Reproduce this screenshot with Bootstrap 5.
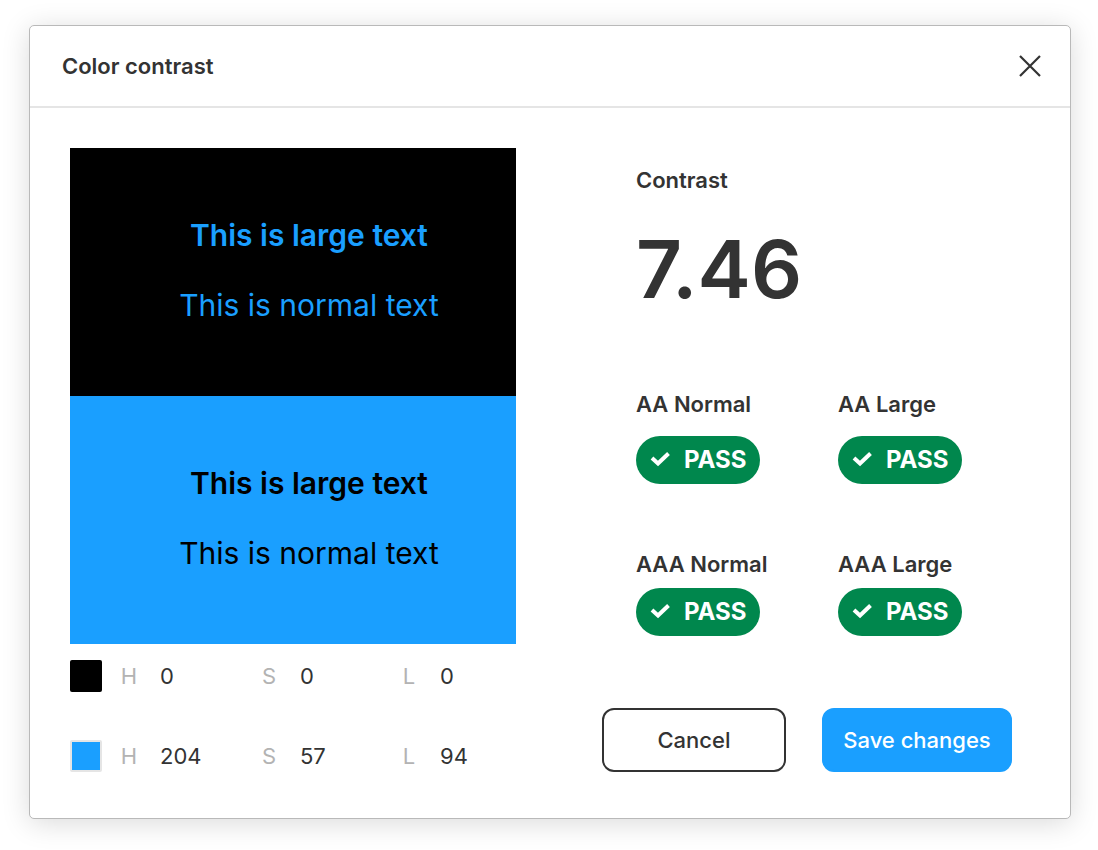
<!DOCTYPE html>
<html lang="en">
<head>
<meta charset="utf-8">
<meta name="viewport" content="width=device-width, initial-scale=1">
<title>Color contrast</title>
<link href="https://cdn.jsdelivr.net/npm/bootstrap@5.3.0/dist/css/bootstrap.min.css" rel="stylesheet">
<style>
  :root { --ink: #333; --accent: #1a9fff; --line: #e5e5e5; --good: #00874d; }
  body { font-family: Inter, "Liberation Sans", sans-serif; font-size: 22px; line-height: 32px; color: var(--ink); background: #fff; }
  .page-shell { padding: 25px 27px 31px 29px; }
  .plugin { border: 1px solid #b9b9b9; border-radius: 5px; background: #fff; box-shadow: 0 4px 28px rgba(0, 0, 0, .15); }
  .plugin-head { height: 82px; padding: 0 24px 0 32px; border-bottom: 2px solid var(--line); }
  .plugin-title, .metric-title { font-size: 22px; line-height: 32px; font-weight: 600; margin: 0; }
  .close-btn { width: 32px; height: 32px; padding: 0; border: 0; background: none; color: var(--ink); }
  .plugin-body { padding: 40px 58px 46px 40px; column-gap: 86px; row-gap: 40px; }
  .sample { height: 248px; padding: 67px 0 0 32px; text-align: center; font-size: 30px; line-height: 40px; }
  .sample p { margin: 0 0 30px; }
  .sample-dark { background: #000; color: var(--accent); }
  .sample-blue { background: var(--accent); color: #000; }
  .swatch { width: 32px; height: 32px; border-radius: 2px; margin-right: 18px; }
  .swatch-black { background: #000; }
  .swatch-blue { background: var(--accent); border: 2px solid var(--line); }
  .channel { width: 140px; flex: none; }
  .channel:last-child { width: auto; }
  .channel label { width: 18px; text-align: center; color: #b3b3b3; margin-right: 22px; }
  .channel input { width: 64px; height: 32px; padding: 0; border: 0; background: none; color: var(--ink); }
  .swatches { margin-top: 16px; gap: 48px; }
  .results { padding: 16px 0 0 34px; }
  .ratio { font-size: 80px; line-height: 98px; font-weight: 600; margin: 24px 0 70px; }
  .levels { display: grid; grid-template-columns: 202px auto; row-gap: 64px; }
  .pass-pill { width: 124px; height: 48px; padding-left: 12px; gap: 12px; border-radius: 24px; background: var(--good); color: #fff; font-size: 24px; font-weight: 700; }
  .actions { margin-top: 72px; gap: 36px; }
  .action-btn { height: 64px; padding: 0; border-radius: 12px; font-size: 22px; font-weight: 500; border: 2px solid var(--ink); color: var(--ink); background: #fff; width: 184px; }
  .action-save { border-color: var(--accent); background: var(--accent); color: #fff; width: 190px; }
  @media (min-width: 992px) {
    .preview { flex: 1 1 0; }
    .checks { width: 410px; flex: none; }
  }
</style>
</head>
<body>
<main class="page-shell">
  <section class="plugin" aria-labelledby="title">
    <header class="plugin-head d-flex align-items-center justify-content-between">
      <h1 class="plugin-title" id="title">Color contrast</h1>
      <button type="button" class="close-btn d-flex" aria-label="Close">
        <svg width="32" height="32" viewBox="0 0 32 32" fill="none" stroke="currentColor" stroke-width="2.2"><path d="M6 6l20 20M26 6L6 26"/></svg>
      </button>
    </header>
    <div class="plugin-body d-flex flex-column flex-lg-row">
      <div class="preview">
        <div class="sample sample-dark"><p class="fw-semibold">This is large text</p><p>This is normal text</p></div>
        <div class="sample sample-blue"><p class="fw-semibold">This is large text</p><p>This is normal text</p></div>
        <div class="swatches d-flex flex-column">
          <div class="d-flex">
            <span class="swatch swatch-black flex-shrink-0"></span>
            <div class="channel d-flex"><label for="h1">H</label><input id="h1" type="text" value="0"></div>
            <div class="channel d-flex"><label for="s1">S</label><input id="s1" type="text" value="0"></div>
            <div class="channel d-flex"><label for="l1">L</label><input id="l1" type="text" value="0"></div>
          </div>
          <div class="d-flex">
            <span class="swatch swatch-blue flex-shrink-0"></span>
            <div class="channel d-flex"><label for="h2">H</label><input id="h2" type="text" value="204"></div>
            <div class="channel d-flex"><label for="s2">S</label><input id="s2" type="text" value="57"></div>
            <div class="channel d-flex"><label for="l2">L</label><input id="l2" type="text" value="94"></div>
          </div>
        </div>
      </div>
      <div class="checks">
        <div class="results">
          <h2 class="metric-title">Contrast</h2>
          <p class="ratio">7.46</p>
          <div class="levels">
            <div class="d-flex flex-column gap-3">
              <h3 class="metric-title">AA Normal</h3>
              <div class="pass-pill d-flex align-items-center"><svg width="24" height="24" viewBox="0 0 24 24" fill="none" stroke="currentColor" stroke-width="4"><path d="M4 10l6 5.500 10.500-10"/></svg><span>PASS</span></div>
            </div>
            <div class="d-flex flex-column gap-3">
              <h3 class="metric-title">AA Large</h3>
              <div class="pass-pill d-flex align-items-center"><svg width="24" height="24" viewBox="0 0 24 24" fill="none" stroke="currentColor" stroke-width="4"><path d="M4 10l6 5.500 10.500-10"/></svg><span>PASS</span></div>
            </div>
            <div class="d-flex flex-column gap-2">
              <h3 class="metric-title">AAA Normal</h3>
              <div class="pass-pill d-flex align-items-center"><svg width="24" height="24" viewBox="0 0 24 24" fill="none" stroke="currentColor" stroke-width="4"><path d="M4 10l6 5.500 10.500-10"/></svg><span>PASS</span></div>
            </div>
            <div class="d-flex flex-column gap-2">
              <h3 class="metric-title">AAA Large</h3>
              <div class="pass-pill d-flex align-items-center"><svg width="24" height="24" viewBox="0 0 24 24" fill="none" stroke="currentColor" stroke-width="4"><path d="M4 10l6 5.500 10.500-10"/></svg><span>PASS</span></div>
            </div>
          </div>
        </div>
        <div class="actions d-flex">
          <button type="button" class="btn action-btn">Cancel</button>
          <button type="button" class="btn action-btn action-save">Save changes</button>
        </div>
      </div>
    </div>
  </section>
</main>
<script src="https://cdn.jsdelivr.net/npm/bootstrap@5.3.0/dist/js/bootstrap.bundle.min.js"></script>
</body>
</html>
